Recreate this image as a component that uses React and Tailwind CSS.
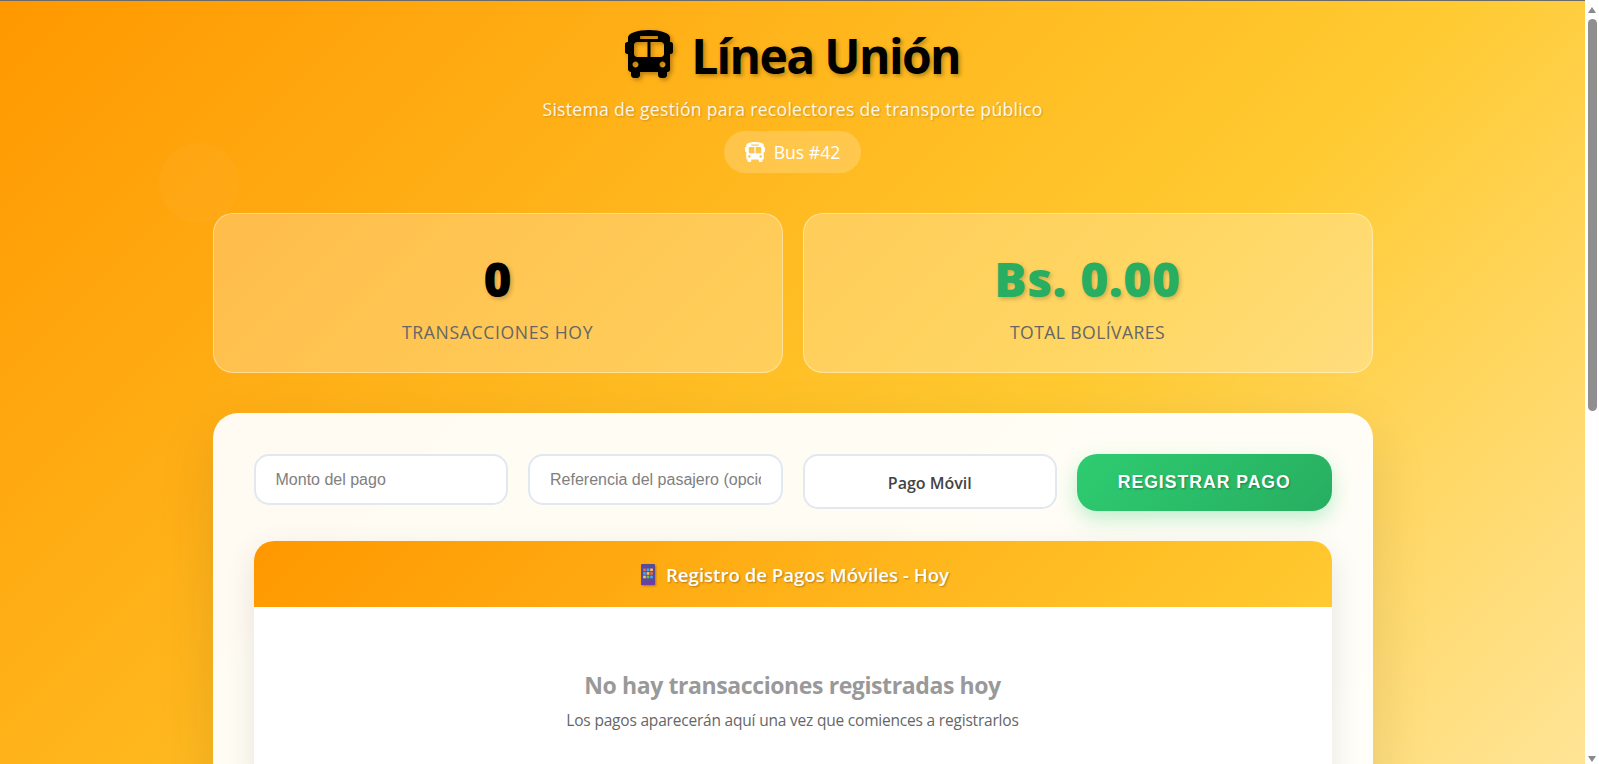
import React from "react";
import { FaBusAlt } from "react-icons/fa";

const font = "font-['Open_Sans','Noto_Sans',sans-serif]";
const arial = "font-['Liberation_Sans',Arial,sans-serif]";

function PhoneEmoji() {
  const colors = ["#f2683c", "#3fa9f5", "#f7c948", "#3fa9f5", "#f7c948", "#f2683c", "#f7c948", "#6cc24a", "#3fa9f5"];
  return (
    <svg width="14" height="21" viewBox="0 0 14 21" className="mr-[11px] drop-shadow-[1px_1px_1px_rgba(0,0,0,0.3)]">
      <rect x="0" y="0" width="14" height="21" rx="1" fill="#5a4a9c" />
      <rect x="0" y="17" width="14" height="4" rx="1" fill="#6d3f9e" />
      {colors.map((c, i) => (
        <rect key={i} x={2.2 + (i % 3) * 3.5} y={4.5 + Math.floor(i / 3) * 3.6} width="2.6" height="2.6" fill={c} />
      ))}
    </svg>
  );
}

function Stat({ value, label, valueClass, labelClass }) {
  return (
    <div className="h-[160px] rounded-[20px] border border-white/40 bg-white/25 flex flex-col items-center pt-[29px]">
      <div className={`text-[48px] leading-[72px] font-extrabold [text-shadow:2px_2px_4px_rgba(0,0,0,0.2)] ${valueClass}`}>{value}</div>
      <div className={`mt-[4px] text-[17.6px] leading-[26px] uppercase text-[#666] ${labelClass}`}>{label}</div>
    </div>
  );
}

export default function App() {
  return (
    <div className={`flex h-[764px] w-full overflow-hidden bg-white ${font}`}>
      <div className="relative flex-1 h-[764px] overflow-hidden">
        <div className="relative h-[1425px] bg-[linear-gradient(135deg,#ff9800_0%,#ffca30_48%,#fff8e1_100%)] border-t border-[#6b6b6b]">
          <div className="absolute left-[159px] top-[142px] h-[80px] w-[80px] rounded-full bg-white/[0.03]" />
          <div className="relative mx-auto w-[1200px] px-[20px] pt-[20px]">
            <header className="flex flex-col items-center">
              <h1 className="flex items-center h-[70px] text-[48px] font-bold text-black [text-shadow:2px_2px_4px_rgba(0,0,0,0.3)]">
                <FaBusAlt className="w-[48px] h-[48px] mr-[18px] mb-[5px] drop-shadow-[2px_2px_2px_rgba(0,0,0,0.3)]" />
                <span className="tracking-[-1.65px]">Línea Unión</span>
              </h1>
              <p className="mt-[5px] h-[26px] text-[17.6px] leading-[26px] tracking-[0.28px] text-white/90 [text-shadow:1px_1px_2px_rgba(0,0,0,0.2)]">
                Sistema de gestión para recolectores de transporte público
              </p>
              <div className="mt-[9px] flex items-center h-[42px] w-[137px] justify-center rounded-full bg-white/20 text-white text-[17.6px]">
                <FaBusAlt className="w-[20px] h-[20px] mr-[9px]" />
                <span className="pt-[1px]">Bus #42</span>
              </div>
            </header>

            <section className="mt-[40px] grid grid-cols-2 gap-[20px]">
              <Stat value="0" label="Transacciones Hoy" valueClass="text-black" labelClass="tracking-[0.65px]" />
              <Stat value="Bs. 0.00" label="Total Bolívares" valueClass="text-[#27ae60] tracking-[0.6px]" labelClass="tracking-[0.4px]" />
            </section>

            <main className="mt-[40px] rounded-[25px] bg-white/95 p-[41px] shadow-[0_20px_60px_rgba(0,0,0,0.1)] h-[900px]">
              <div className="grid grid-cols-4 gap-[20px] items-start">
                <input
                  placeholder="Monto del pago"
                  className={`h-[51px] w-full rounded-[15px] border-2 border-[#e2e8f0] bg-white px-[20px] text-[16px] outline-none placeholder:text-[#808080] ${arial}`}
                />
                <input
                  placeholder="Referencia del pasajero (opcional)"
                  className={`h-[51px] w-full rounded-[15px] border-2 border-[#e2e8f0] bg-white px-[20px] text-[16px] outline-none placeholder:text-[#808080] ${arial}`}
                />
                <select className="h-[55px] w-full appearance-none rounded-[15px] border-2 border-[#e2e8f0] bg-white px-[20px] pt-[2px] text-center text-[16px] font-semibold text-[#444] outline-none">
                  <option>Pago Móvil</option>
                </select>
                <button className={`h-[57px] w-full rounded-[20px] bg-[linear-gradient(135deg,#2ecc71,#27ae60)] text-[17.6px] font-bold uppercase tracking-[1px] text-white shadow-[0_8px_20px_rgba(46,204,113,0.3)] [text-shadow:1px_1px_2px_rgba(0,0,0,0.3)] ${arial}`}>
                  Registrar Pago
                </button>
              </div>

              <div className="mt-[30px] rounded-[20px] bg-white shadow-[0_10px_30px_rgba(0,0,0,0.1)] overflow-hidden">
                <div className="flex h-[66px] items-center justify-center pl-[5px] bg-[linear-gradient(135deg,#ff9800,#ffca30)] text-[18.6px] font-semibold text-white [text-shadow:1px_1px_2px_rgba(0,0,0,0.3)]">
                  <PhoneEmoji />
                  <span className="pt-[2px]">Registro de Pagos Móviles - Hoy</span>
                </div>
                <div className="flex flex-col items-center pt-[60px] pb-[60px]">
                  <h3 className="text-[23px] leading-[36px] tracking-[-0.4px] font-bold text-[#999]">No hay transacciones registradas hoy</h3>
                  <p className="mt-[5px] text-[15.5px] leading-[24px] tracking-[-0.2px] text-[#666]">Los pagos aparecerán aquí una vez que comiences a registrarlos</p>
                </div>
              </div>
            </main>
          </div>
        </div>
      </div>

      <div className="relative w-[14px] h-[764px] bg-white flex flex-col items-center shrink-0">
        <div className="mt-[7px] h-0 w-0 border-x-[4.5px] border-b-[6px] border-x-transparent border-b-[#8a8a8a]" />
        <div className="mt-[6px] h-[392px] w-[9px] rounded-full bg-[#8f8f8f]" />
        <div className="mt-auto mb-[2px] h-0 w-0 border-x-[4.5px] border-t-[6px] border-x-transparent border-t-[#8a8a8a]" />
      </div>
    </div>
  );
}
